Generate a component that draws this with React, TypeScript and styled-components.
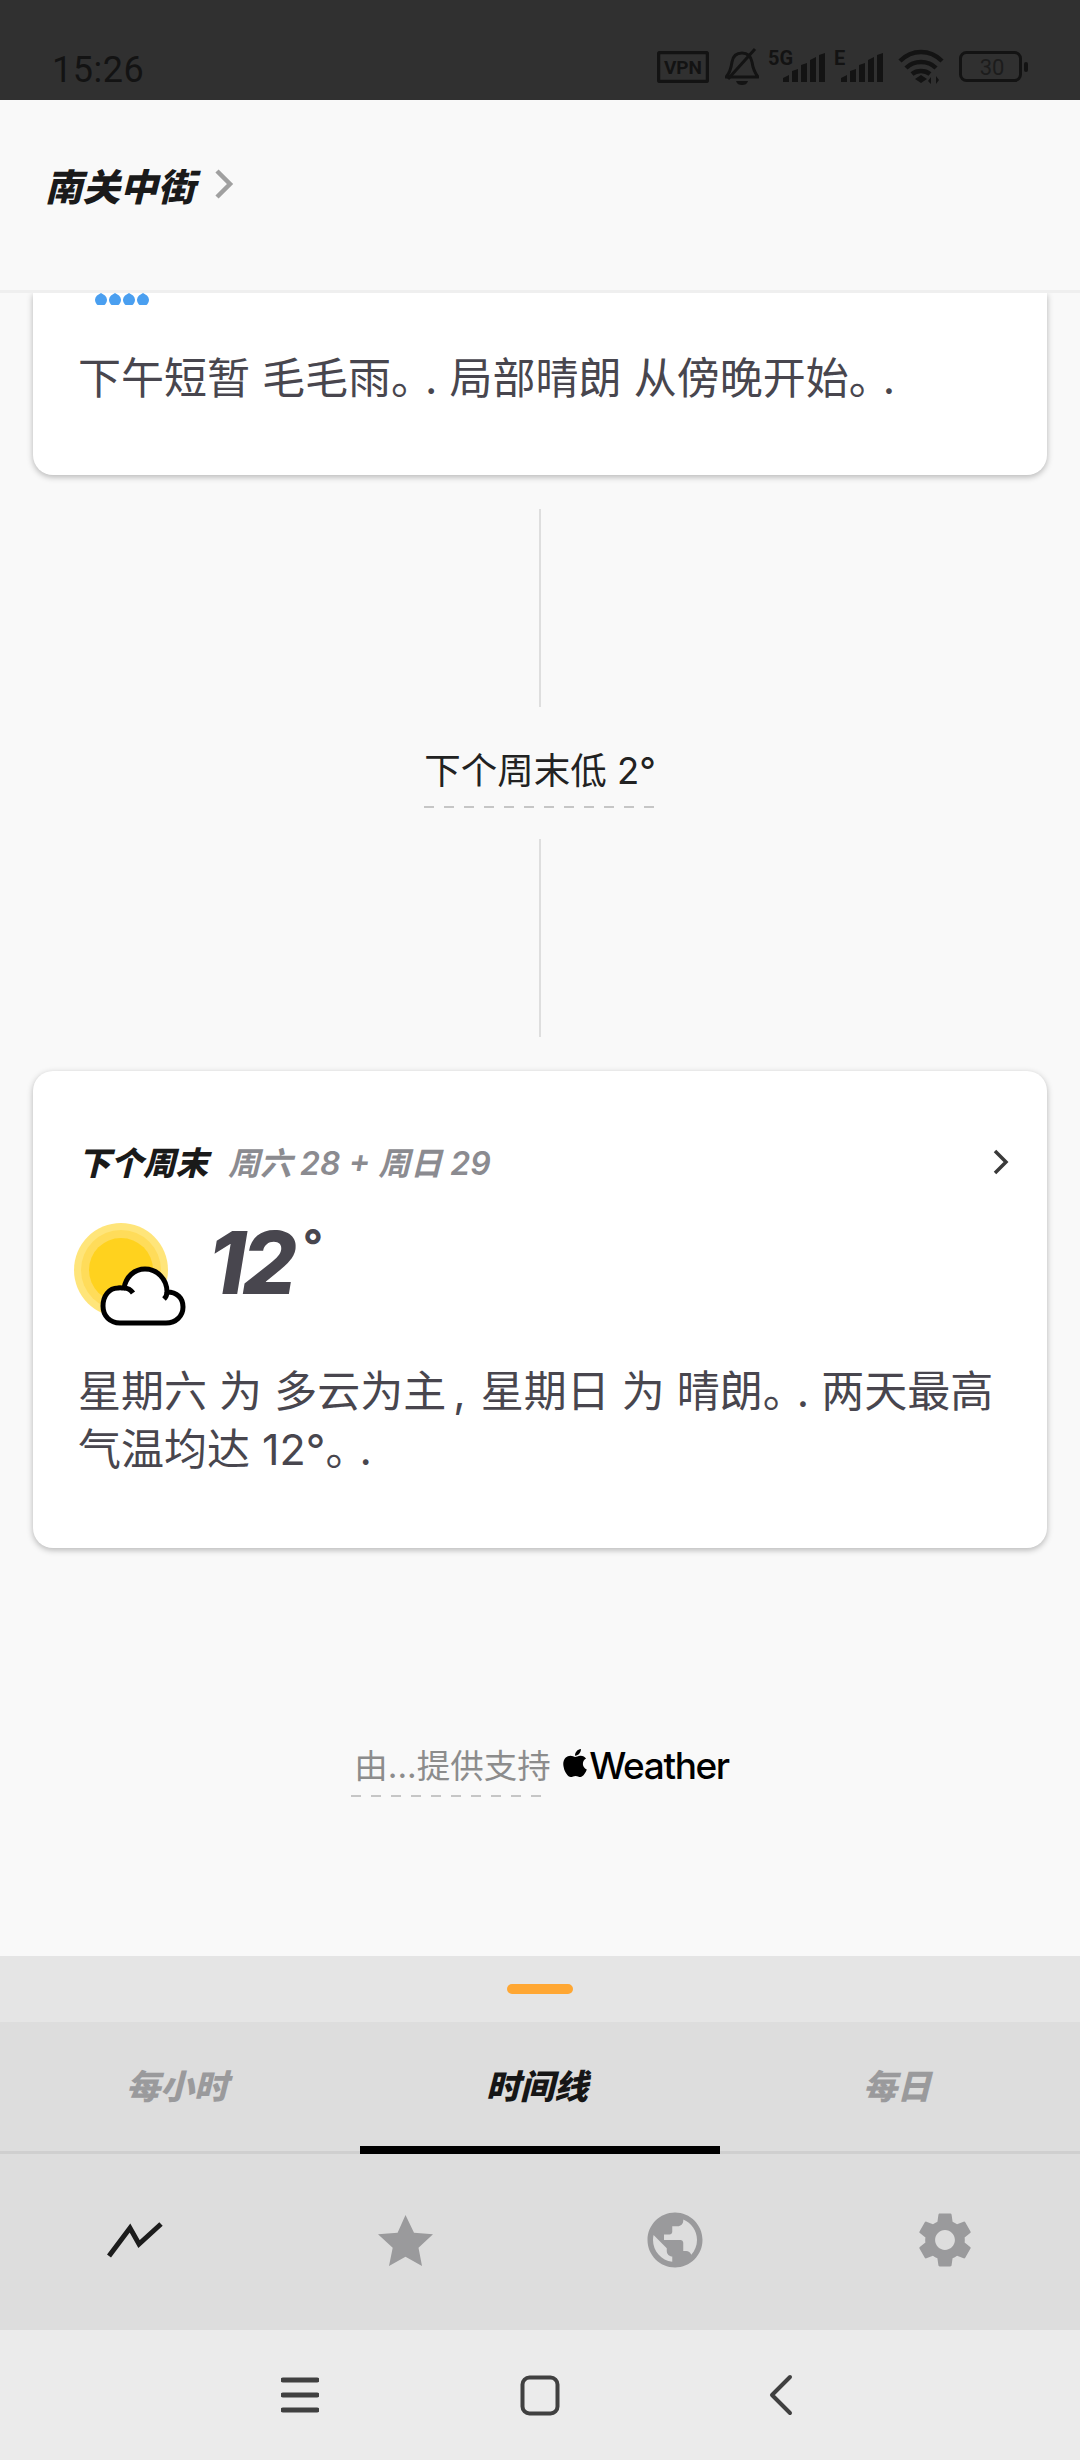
import React from 'react'
import styled, { createGlobalStyle } from 'styled-components'
import { FaApple } from 'react-icons/fa'
import { MdPublic, MdSettings } from 'react-icons/md'

const GlobalStyle = createGlobalStyle`
    html, body {
        margin: 0;
        padding: 0;
        background: #f9f9f9;
    }
    * {
        box-sizing: border-box;
    }
`

const fontStack = `Inter, "Noto Sans CJK SC", "Liberation Sans", sans-serif`

const Page = styled.div`
    width: 1080px;
    height: 2460px;
    display: flex;
    flex-direction: column;
    overflow: hidden;
    background: #f9f9f9;
    font-family: ${fontStack};
`

const StatusBar = styled.div`
    height: 100px;
    flex: none;
    background: #303030;
    display: flex;
    justify-content: space-between;
    align-items: flex-end;
    padding: 0 51px 12px 52px;
`

const Clock = styled.div`
    font-family: Roboto, sans-serif;
    font-size: 36px;
    line-height: 36px;
    letter-spacing: 0.5px;
    color: #131313;
`

const StatusIcons = styled.div`
    display: flex;
    align-items: center;
    height: 42px;
    color: #131313;
`

const StatusIcon = styled.svg<{ $left?: number }>`
    display: block;
    flex: none;
    margin-left: ${p => p.$left || 0}px;
`

const Header = styled.div`
    height: 193px;
    flex: none;
    border-bottom: 3px solid #efefef;
    display: flex;
    align-items: center;
    gap: 19px;
    padding: 0 0 22px 45px;
`

const Location = styled.div`
    font-size: 37.5px;
    font-weight: 900;
    font-style: italic;
    color: #1a1a1a;
`

const Main = styled.div`
    flex: 1;
    min-height: 0;
    overflow: hidden;
    padding: 0 33px;
    display: flex;
    flex-direction: column;
    align-items: center;
`

const Card = styled.div`
    width: 100%;
    flex: none;
    background: #fff;
    border-radius: 20px;
    box-shadow: 0 2px 6px rgba(0, 0, 0, 0.28);
`

const CutCard = styled(Card)`
    height: 182px;
    border-radius: 0 0 20px 20px;
    padding: 0 45px;
    margin-bottom: 34px;
`

const Drops = styled.svg`
    display: block;
    margin-left: 17px;
`

const Body = styled.p`
    margin: 0;
    font-size: 43px;
    line-height: 58px;
    font-weight: 400;
    color: #48464e;
`

const Stop = styled.span`
    margin-right: -9px;
`

const Comma = styled.span`
    margin: 0 3px 0 7px;
`

const CutBody = styled(Body)`
    margin-top: 44px;
    white-space: nowrap;
`

const Connector = styled.div`
    width: 2px;
    height: 198px;
    flex: none;
    background: #dedede;
`

const DashLabel = styled.div`
    font-size: 36.5px;
    line-height: 48px;
    color: #222;
    padding-bottom: 13px;
    background: repeating-linear-gradient(90deg, #c6c6c6 0 10px, transparent 10px 20px) left bottom / 100% 2px no-repeat;
    white-space: nowrap;
`

const CreditLabel = styled(DashLabel)`
    width: 190px;
    font-size: 33.5px;
    color: #8c8c8c;
    padding-bottom: 7px;
    text-indent: 3px;
`

const TimelineLabel = styled.div`
    flex: none;
    margin: 40px 0 31px;
`

const WeekendCard = styled(Card)`
    height: 477px;
    margin-top: 34px;
    padding: 71px 36px 0 45px;
`

const CardTitleRow = styled.div`
    display: flex;
    align-items: center;
    justify-content: space-between;
    height: 44px;
`

const CardChevron = styled.svg`
    display: block;
    margin-top: -5px;
`

const CardTitle = styled.div`
    display: flex;
    gap: 20px;
    font-style: italic;
    line-height: 44px;
    white-space: nowrap;
`

const TitleMain = styled.span`
    font-size: 32.5px;
    font-weight: 900;
    color: #1a1a1a;
`

const TitleSub = styled.span`
    font-size: 32px;
    font-weight: 600;
    color: #8b8b90;
`

const Forecast = styled.div`
    display: flex;
    align-items: flex-start;
    gap: 22px;
    margin: 37px 0 0 -4px;
    height: 126px;
`

const SunIcon = styled.svg`
    display: block;
    flex: none;
`

const Temperature = styled.div`
    font-size: 86px;
    line-height: 96px;
    font-weight: 800;
    font-style: italic;
    letter-spacing: -4px;
    color: #48464e;
    margin-top: -8px;
`

const Degree = styled.sup`
    font-size: 44px;
    line-height: 0;
    font-weight: 700;
    vertical-align: 33px;
    margin-left: 8px;
`

const WeekendBody = styled(Body)`
    margin-top: 13px;
`

const Credit = styled.div`
    flex: none;
    margin-top: 194px;
    display: flex;
    align-items: flex-start;
    gap: 20px;
`

const AppleWeather = styled.div`
    display: flex;
    align-items: center;
    font-size: 37px;
    line-height: 48px;
    font-weight: 500;
    letter-spacing: -1.4px;
    color: #000;
`

const AppleMark = styled(FaApple)`
    flex: none;
    margin: -6px -2px 0 -2px;
`

const Sheet = styled.div`
    flex: none;
    background: #ddd;
`

const HandleRow = styled.div`
    height: 66px;
    background: #e5e5e5;
    padding-top: 28px;
`

const Handle = styled.div`
    width: 66px;
    height: 10px;
    margin: 0 auto;
    border-radius: 5px;
    background: #ffa733;
`

const TabRow = styled.div`
    display: grid;
    grid-template-columns: repeat(3, 360px);
    height: 132px;
`

const Tab = styled.div<{ $active?: boolean }>`
    display: flex;
    align-items: center;
    justify-content: center;
    padding-right: 6px;
    padding-bottom: ${p => (p.$active ? '0' : '5px')};
    font-size: 34px;
    font-weight: 900;
    font-style: italic;
    color: ${p => (p.$active ? '#161616' : '#9a9a9c')};
    border-bottom: ${p => (p.$active ? '8px solid #000' : '3px solid #cfcfcf')};
`

const BottomNav = styled.div`
    display: grid;
    grid-template-columns: repeat(4, 270px);
    height: 176px;
`

const NavItem = styled.div<{ $active?: boolean }>`
    display: flex;
    align-items: center;
    justify-content: center;
    padding-bottom: 4px;
    color: ${p => (p.$active ? '#1c1c1c' : '#9a9a9c')};
`

const SystemNav = styled.div`
    flex: none;
    height: 130px;
    background: #ebebeb;
    color: #404040;
    display: flex;
    align-items: center;
    justify-content: center;
    gap: 200px;
`

const SystemSlot = styled.div`
    width: 40px;
    display: flex;
    justify-content: center;
`

const SunCloud = () => (
    <SunIcon width="112" height="104" viewBox="0 0 112 104">
        <circle cx="47" cy="47" r="47" fill="#ffe57a" />
        <circle cx="47" cy="47" r="40" fill="#ffdc5a" />
        <circle cx="47" cy="47" r="32" fill="#ffd21e" />
        <path
            d="M46 100H92C102 100 109 93 109 84C109 75 103 69 93 69C93 56 83 46 71 46C60 46 52 54 50 65C48 65 46 64.5 44 65C35 65 29 73 29 83C29 93 36 100 46 100Z"
            fill="#fff"
            stroke="#000"
            strokeWidth="5"
            strokeLinejoin="round"
        />
        <path d="M50 65C54 65 57 67 59 70M93 69C93 71 92 74 90 76" fill="none" stroke="#000" strokeWidth="5" />
    </SunIcon>
)

const App: React.FC = () => {
    return (
        <Page>
            <GlobalStyle />
            <StatusBar>
                <Clock>15:26</Clock>
                <StatusIcons>
                    <StatusIcon width="52" height="32" viewBox="0 0 52 32">
                        <rect x="1.5" y="1.5" width="49" height="29" rx="2" fill="none" stroke="currentColor" strokeWidth="3.5" />
                        <text x="26" y="23" textAnchor="middle" fontFamily="Roboto, sans-serif" fontWeight="700" fontSize="19" fill="currentColor">VPN</text>
                    </StatusIcon>
                    <StatusIcon $left={16} width="34" height="38" viewBox="0 0 34 38">
                        <path d="M1 29c4-4 5-8 6-15 1-6 5-9 10-9 6 0 9 4 10 9 1 7 3 11 6 15z" fill="none" stroke="currentColor" strokeWidth="3" strokeLinejoin="round" />
                        <path d="M3 31L30 1" stroke="currentColor" strokeWidth="3" />
                        <path d="M11 33h12c-1 3-3 4-6 4s-5-1-6-4z" fill="currentColor" />
                    </StatusIcon>
                    <StatusIcon $left={9} width="59" height="42" viewBox="0 0 59 42">
                        <text x="0" y="19" fontFamily="Roboto, sans-serif" fontWeight="700" fontSize="20" fill="currentColor">5G</text>
                        <path d="M15 36v-4l6-3v7zM24 36v-11l6-2v13zM33 36v-17l6-2v19zM42 36v-22l6-3v25zM51 36v-27l6-2v29z" fill="currentColor" />
                    </StatusIcon>
                    <StatusIcon $left={7} width="51" height="42" viewBox="0 0 51 42">
                        <text x="0" y="19" fontFamily="Roboto, sans-serif" fontWeight="700" fontSize="20" fill="currentColor">E</text>
                        <path d="M7 36v-4l6-3v7zM16 36v-11l6-2v13zM25 36v-17l6-2v19zM34 36v-22l6-3v25zM43 36v-27l6-2v29z" fill="currentColor" />
                    </StatusIcon>
                    <StatusIcon $left={13} width="46" height="36" viewBox="0 0 46 36">
                        <path d="M2 12c12-12 30-12 42 0M8 19c8-8 22-8 30 0M14 25c5-4 13-4 18 0" fill="none" stroke="currentColor" strokeWidth="4.5" />
                        <path d="M17 30l6-4 6 4-6 4z" fill="currentColor" />
                        <path d="M33 35v-7l-3 4zM38 27v8l3-4z" fill="currentColor" />
                    </StatusIcon>
                    <StatusIcon $left={15} width="70" height="32" viewBox="0 0 70 32">
                        <rect x="1.5" y="1.5" width="60" height="28" rx="6" fill="none" stroke="currentColor" strokeWidth="3" />
                        <text x="33" y="23.5" textAnchor="middle" fontFamily="Roboto, sans-serif" fontSize="22" fill="#1c1c1c">30</text>
                        <rect x="65" y="11" width="4" height="10" rx="2" fill="currentColor" />
                    </StatusIcon>
                </StatusIcons>
            </StatusBar>

            <Header>
                <Location>南关中街</Location>
                <svg width="20" height="30" viewBox="0 0 20 30">
                    <path d="M3 2l13 13L3 28" fill="none" stroke="#a0a0a0" strokeWidth="4.5" />
                </svg>
            </Header>

            <Main>
                <CutCard>
                    <Drops width="56" height="12" viewBox="0 0 56 12">
                        <path
                            d="M6 0l4 2.5a6 6 0 1 1-8 0zM20 0l4 2.5a6 6 0 1 1-8 0zM34 0l4 2.5a6 6 0 1 1-8 0zM48 0l4 2.5a6 6 0 1 1-8 0z"
                            fill="#4a9ff0"
                        />
                    </Drops>
                    <CutBody>下午短暂 毛毛雨<Stop>。</Stop>. 局部晴朗 从傍晚开始<Stop>。</Stop>.</CutBody>
                </CutCard>

                <Connector />
                <TimelineLabel>
                    <DashLabel>下个周末低 2°</DashLabel>
                </TimelineLabel>
                <Connector />

                <WeekendCard>
                    <CardTitleRow>
                        <CardTitle>
                            <TitleMain>下个周末</TitleMain>
                            <TitleSub>周六 28 + 周日 29</TitleSub>
                        </CardTitle>
                        <CardChevron width="20" height="28" viewBox="0 0 20 28">
                            <path d="M4 3l11 11L4 25" fill="none" stroke="#3a3a3a" strokeWidth="3.5" />
                        </CardChevron>
                    </CardTitleRow>
                    <Forecast>
                        <SunCloud />
                        <Temperature>12<Degree>°</Degree></Temperature>
                    </Forecast>
                    <WeekendBody>
                        星期六 为 多云为主<Comma>,</Comma> 星期日 为 晴朗<Stop>。</Stop>. 两天最高气温均达 12°<Stop>。</Stop>.
                    </WeekendBody>
                </WeekendCard>

                <Credit>
                    <CreditLabel>由...提供支持</CreditLabel>
                    <AppleWeather>
                        <AppleMark size={32} />
                        Weather
                    </AppleWeather>
                </Credit>
            </Main>

            <Sheet>
                <HandleRow>
                    <Handle />
                </HandleRow>
                <TabRow>
                    <Tab>每小时</Tab>
                    <Tab $active>时间线</Tab>
                    <Tab>每日</Tab>
                </TabRow>
                <BottomNav>
                    <NavItem $active>
                        <svg width="56" height="36" viewBox="0 0 56 36">
                            <path d="M2 34L23 6l9 16L54 2" fill="none" stroke="currentColor" strokeWidth="5" />
                        </svg>
                    </NavItem>
                    <NavItem>
                        <svg width="55" height="51" viewBox="0 0 55 51">
                            <path d="M27.5 0L36 17.7 55 19.3 40.5 32.7 44 51 27.5 41.7 11 51 14.7 32.7 0 19.3 19.6 17.7z" fill="currentColor" />
                        </svg>
                    </NavItem>
                    <NavItem>
                        <MdPublic size={66} />
                    </NavItem>
                    <NavItem>
                        <MdSettings size={66} />
                    </NavItem>
                </BottomNav>
            </Sheet>

            <SystemNav>
                <SystemSlot>
                    <svg width="38" height="36" viewBox="0 0 38 36">
                        <path d="M2 3h34M2 18h34M2 33h34" stroke="currentColor" strokeWidth="5" strokeLinecap="round" />
                    </svg>
                </SystemSlot>
                <SystemSlot>
                    <svg width="40" height="41" viewBox="0 0 40 41">
                        <rect x="2.5" y="2.5" width="35" height="36" rx="7" fill="none" stroke="currentColor" strokeWidth="4" />
                    </svg>
                </SystemSlot>
                <SystemSlot>
                    <svg width="26" height="42" viewBox="0 0 26 42">
                        <path d="M23 3L5 21l18 18" fill="none" stroke="currentColor" strokeWidth="4" strokeLinecap="round" strokeLinejoin="round" />
                    </svg>
                </SystemSlot>
            </SystemNav>
        </Page>
    )
}

export default App
